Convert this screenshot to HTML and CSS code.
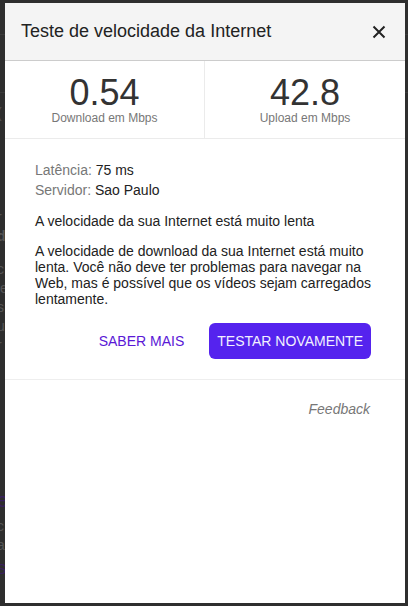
FILE: index.html
```html
<!DOCTYPE html>
<html lang="pt-BR">
<head>
    <meta charset="UTF-8">
    <meta name="viewport" content="width=device-width, initial-scale=1.0">
    <title>Teste de velocidade da Internet</title>
    <link rel="stylesheet" href="styles.css">
</head>
<body>
    <!-- Page behind the dialog (dimmed) -->
    <div class="page">
        <div class="page-bar first"></div>
        <div class="page-bar"></div>
        <p class="page-line paren">(</p>
        <p class="page-line gap-r">r</p>
        <p class="page-line bold">d</p>
        <p class="page-line gap-c">c</p>
        <p class="page-line">le</p>
        <p class="page-line">s</p>
        <p class="page-line">u</p>
        <p class="page-line">r</p>
        <p class="page-line link big">e</p>
        <p class="page-line gap-small">c</p>
        <p class="page-line">a</p>
        <p class="page-line link gap-small">S</p>
    </div>

    <!-- Speed test dialog -->
    <div class="modal">
        <div class="modal-header">
            <h2>Teste de velocidade da Internet</h2>
            <button class="close" aria-label="Fechar">
                <svg width="14" height="14" viewBox="0 0 14 14">
                    <path d="M1.5 1.5 L12.5 12.5 M12.5 1.5 L1.5 12.5" stroke="#222" stroke-width="2" fill="none"/>
                </svg>
            </button>
        </div>

        <div class="stats">
            <div class="stat">
                <div class="stat-value">0.54</div>
                <div class="stat-label">Download em Mbps</div>
            </div>
            <div class="stat">
                <div class="stat-value">42.8</div>
                <div class="stat-label">Upload em Mbps</div>
            </div>
        </div>

        <div class="details">
            <div class="info"><span class="key">Latência:</span> 75 ms</div>
            <div class="info"><span class="key">Servidor:</span> Sao Paulo</div>

            <p class="summary">A velocidade da sua Internet está muito lenta</p>
            <p class="description">A velocidade de download da sua Internet está muito lenta. Você não deve ter problemas para navegar na Web, mas é possível que os vídeos sejam carregados lentamente.</p>

            <div class="actions">
                <button class="btn-text">SABER MAIS</button>
                <button class="btn-primary">TESTAR NOVAMENTE</button>
            </div>
        </div>

        <div class="footer">
            <a href="#" class="feedback">Feedback</a>
        </div>
    </div>
</body>
</html>
```

FILE: styles.css
```css
body {
    margin: 0;
    padding: 0;
    height: 606px;
    overflow: hidden;
    background-color: #2e2e2e;
    font-family: Arial, "Liberation Sans", sans-serif;
}
.page {
    padding-top: 34px;
}
.page-bar {
    height: 1px;
    background: #3a3a3a;
}
.page-bar.first {
    margin-bottom: 57px;
}
.page-line {
    margin: 0;
    color: #555;
    font-size: 14px;
    line-height: 19px;
    margin-left: -3px;
}
.page-line.paren {
    margin-top: 11px;
}
.page-line.gap-r {
    margin-top: 85px;
}
.page-line.bold {
    font-weight: bold;
}
.page-line.gap-c {
    margin-top: 14px;
}
.page-line.link {
    color: #3a2060;
}
.page-line.big {
    font-size: 20px;
    line-height: 24px;
    margin-top: 133px;
}
.page-line.gap-small {
    margin-top: 5px;
}
.modal {
    position: fixed;
    top: 3px;
    left: 5px;
    width: 400px;
    height: 600px;
    background: #fff;
}
.modal-header {
    height: 57px;
    display: flex;
    align-items: center;
    justify-content: space-between;
    padding: 0 19px 0 16px;
    background: #f4f4f4;
    border-bottom: 1px solid #ccc;
}
.modal-header h2 {
    margin: 0;
    font-size: 18px;
    font-weight: normal;
    color: #222;
}
.close {
    background: none;
    border: none;
    padding: 0;
    width: 14px;
    height: 14px;
    cursor: pointer;
    display: flex;
}
.stats {
    display: grid;
    grid-template-columns: 200px 200px;
    border-bottom: 1px solid #ebebeb;
}
.stat {
    text-align: center;
    padding: 16px 0 13px;
}
.stat:first-child {
    border-right: 1px solid #ebebeb;
}
.stat-value {
    font-size: 36px;
    line-height: 32px;
    color: #333;
}
.stat-label {
    font-size: 12px;
    line-height: 14px;
    color: #777;
    margin-top: 2px;
}
.details {
    padding: 21px 34px 20px 30px;
    font-size: 14px;
    color: #222;
    border-bottom: 1px solid #eee;
}
.info {
    line-height: 20px;
}
.key {
    color: #777;
}
.summary {
    margin: 13px 0 0;
}
.description {
    margin: 14px 0 0;
}
.actions {
    display: flex;
    justify-content: flex-end;
    gap: 17px;
    margin-top: 16px;
}
.actions button {
    font-family: Arial, "Liberation Sans", sans-serif;
    font-size: 14px;
    height: 36px;
    padding: 0 8px;
    border: none;
    border-radius: 6px;
    cursor: pointer;
}
.btn-text {
    background: none;
    color: #5a18d6;
}
.btn-primary {
    background: #5523ee;
    color: #f2f0ff;
}
.footer {
    padding: 20px 35px;
    text-align: right;
}
.feedback {
    font-size: 14px;
    font-style: italic;
    color: #777;
    text-decoration: none;
}
```
